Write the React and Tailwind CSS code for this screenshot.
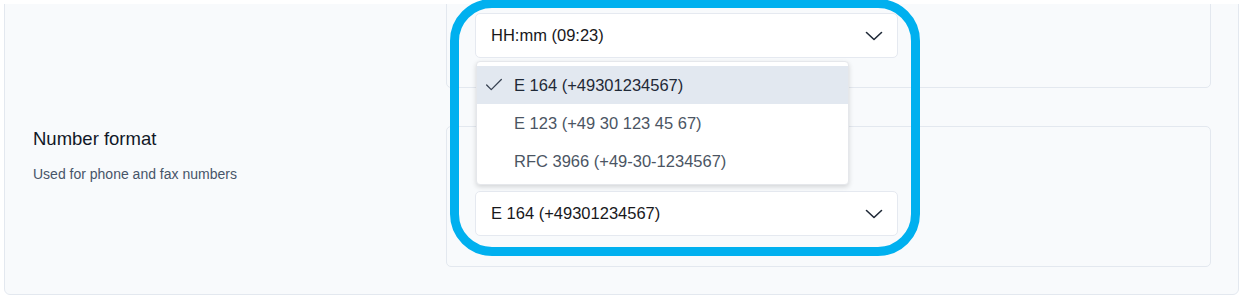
import { Check } from "lucide-react";

function Chevron() {
  return (
    <svg width="18" height="10" viewBox="0 0 18 10" fill="none" className="shrink-0">
      <path d="M1.5 1.5 9 8.5l7.5-7" stroke="#1f2937" strokeWidth="1.6" strokeLinecap="round" strokeLinejoin="round" />
    </svg>
  );
}

function Select({ value }) {
  return (
    <div className="w-[423px] h-[45px] bg-white border border-[#e5e9f0] rounded-[5px] flex items-center justify-between pl-[15px] pr-[14px]">
      <span className="text-[16.5px] text-[#18181b]">{value}</span>
      <Chevron />
    </div>
  );
}

const options = [
  { label: "E 164 (+49301234567)", selected: true },
  { label: "E 123 (+49 30 123 45 67)" },
  { label: "RFC 3966 (+49-30-1234567)" },
];

export default function App() {
  return (
    <div className="relative w-[1245px] h-[299px] bg-white overflow-hidden" style={{ fontFamily: '"Liberation Sans", Arial, sans-serif' }}>
      <div className="mt-[4px] ml-[4px] w-[1235px] h-[291px] overflow-hidden">
        <div className="-mt-[20px] border border-[#e3e8ef] rounded-[6px] bg-[#f8fafc] pb-[27px]">
          {/* time format row */}
          <div className="flex">
            <div className="w-[441px] shrink-0" />
            <div className="w-[765px] border border-[#e3e8ef] rounded-[5px] pt-[27px] pb-[29px] pl-[28px]">
              <Select value="HH:mm (09:23)" />
            </div>
          </div>

          {/* number format row */}
          <div className="flex mt-[38px]">
            <div className="w-[441px] shrink-0 pl-[28px] pt-[1px]">
              <div className="text-[18.5px] leading-[24px] text-[#111827]">Number format</div>
              <div className="mt-[13px] text-[14px] leading-[20px] text-[#475569]">Used for phone and fax numbers</div>
            </div>
            <div className="w-[765px] border border-[#e3e8ef] rounded-[5px] pt-[64px] pb-[30px] pl-[28px]">
              <Select value="E 164 (+49301234567)" />
            </div>
          </div>
        </div>
      </div>

      {/* open dropdown */}
      <div className="absolute left-[476px] top-[61px] w-[373px] bg-white border border-[#e5e7eb] rounded-[4px] shadow-[0_2px_5px_rgba(0,0,0,0.15)] py-[4px]">
        {options.map((o) => (
          <div
            key={o.label}
            className={`h-[38px] flex items-center ${o.selected ? "bg-[#e2e8f0]" : ""}`}
          >
            <div className="w-[37px] pl-[6px] flex items-center">
              {o.selected && <Check size={22} strokeWidth={1.4} color="#374151" />}
            </div>
            <span className={`text-[16.5px] ${o.selected ? "text-[#1f2937]" : "text-[#4b5563]"}`}>{o.label}</span>
          </div>
        ))}
      </div>

      {/* highlight ring */}
      <div className="absolute left-[450px] top-[-1px] w-[470px] h-[257px] border-[9px] border-[#00b0ef] rounded-[42px] pointer-events-none" />
    </div>
  );
}
